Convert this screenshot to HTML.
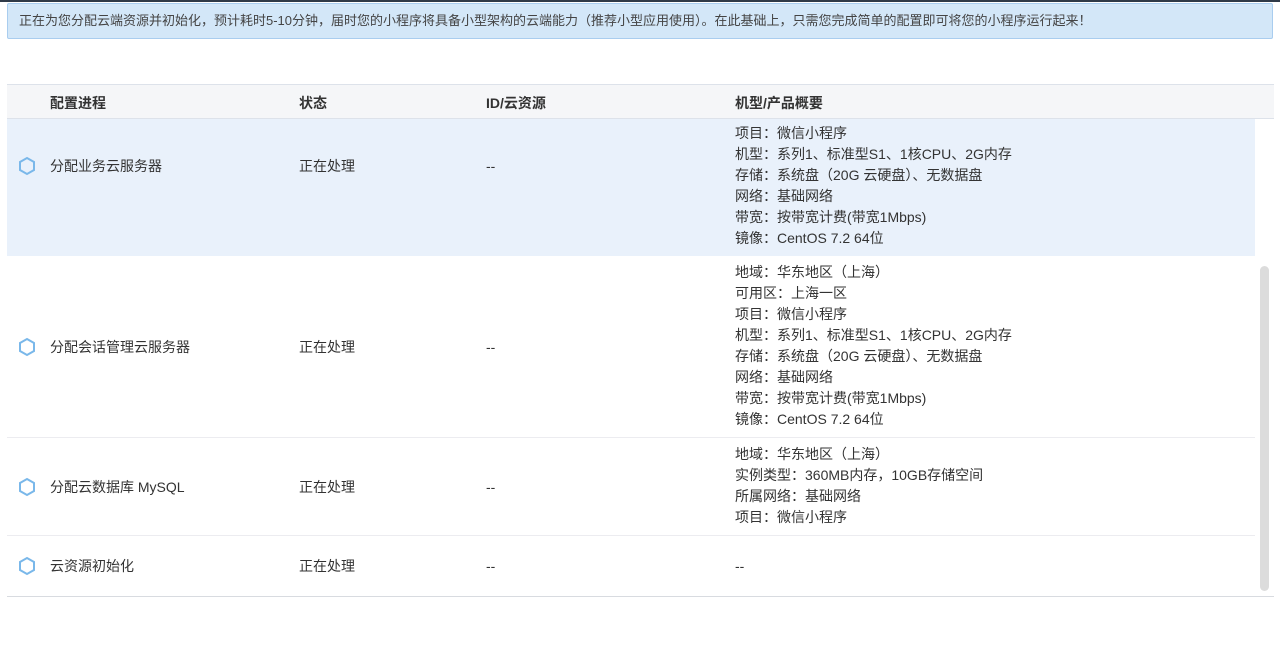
<!DOCTYPE html>
<html><head><meta charset="utf-8"><style>
*{margin:0;padding:0;box-sizing:border-box}
body{width:1280px;height:647px;background:#fff;position:relative;overflow:hidden;font-family:"Liberation Sans","Noto Sans CJK SC",sans-serif;font-size:14px;color:#333}
.top{position:absolute;left:0;top:0;width:1280px;height:2px;background:#2f3a48}
.alert{position:absolute;left:7px;top:3px;width:1266px;height:36px;background:#d3e7f8;border:1px solid #a9cdef;border-radius:2px;font-size:13px;color:#444;padding-left:11px;line-height:34px}
.head{position:absolute;left:7px;top:84px;width:1267px;height:35px;background:#f5f6f8;border-top:1px solid #dde2ea;border-bottom:1px solid #dde2ea;font-weight:bold;font-size:14px;z-index:2}
.t{position:absolute;white-space:nowrap}
.body{position:absolute;left:7px;top:112px;width:1248px;height:485px;overflow:hidden}
.inner{position:absolute;left:0;top:-37px;width:1248px}
.row{position:relative;border-bottom:1px solid #ececf0}
.row .c{position:absolute;top:0;bottom:0;display:flex;align-items:center;white-space:nowrap}
.spec{margin-left:728px;padding:6px 0;line-height:21px}
.ic{left:10px}
.bot{position:absolute;left:7px;top:596px;width:1267px;height:1px;background:#d8dbe0}
.sb{position:absolute;left:1260px;top:266px;width:9px;height:325px;background:#dcdcdc;border-radius:5px}
</style></head><body>
<div class="top"></div>
<div class="alert">正在为您分配云端资源并初始化，预计耗时5-10分钟，届时您的小程序将具备小型架构的云端能力（推荐小型应用使用）。在此基础上，只需您完成简单的配置即可将您的小程序运行起来！</div>
<div class="head">
<span class="t" style="left:43px;top:8px">配置进程</span>
<span class="t" style="left:292px;top:8px">状态</span>
<span class="t" style="left:479px;top:8px">ID/云资源</span>
<span class="t" style="left:728px;top:8px">机型/产品概要</span>
</div>
<div class="body"><div class="inner">
<div class="row" style="background:#e9f1fb;border-bottom:none;height:181px">
<div class="c ic"><svg width="20" height="20" viewBox="0 0 20 20"><path d="M10 2 L17 6 L17 14 L10 18 L3 14 L3 6 Z" fill="none" stroke="#7ab8ea" stroke-width="2"/></svg></div>
<div class="c" style="left:43px">分配业务云服务器</div>
<div class="c" style="left:292px">正在处理</div>
<div class="c" style="left:479px">--</div>
<div class="spec">地域：华东地区（上海）<br>可用区：上海一区<br>项目：微信小程序<br>机型：系列1、标准型S1、1核CPU、2G内存<br>存储：系统盘（20G 云硬盘）、无数据盘<br>网络：基础网络<br>带宽：按带宽计费(带宽1Mbps)<br>镜像：CentOS 7.2 64位</div>
</div>
<div class="row" style="height:182px">
<div class="c ic"><svg width="20" height="20" viewBox="0 0 20 20"><path d="M10 2 L17 6 L17 14 L10 18 L3 14 L3 6 Z" fill="none" stroke="#7ab8ea" stroke-width="2"/></svg></div>
<div class="c" style="left:43px">分配会话管理云服务器</div>
<div class="c" style="left:292px">正在处理</div>
<div class="c" style="left:479px">--</div>
<div class="spec">地域：华东地区（上海）<br>可用区：上海一区<br>项目：微信小程序<br>机型：系列1、标准型S1、1核CPU、2G内存<br>存储：系统盘（20G 云硬盘）、无数据盘<br>网络：基础网络<br>带宽：按带宽计费(带宽1Mbps)<br>镜像：CentOS 7.2 64位</div>
</div>
<div class="row" style="height:98px">
<div class="c ic"><svg width="20" height="20" viewBox="0 0 20 20"><path d="M10 2 L17 6 L17 14 L10 18 L3 14 L3 6 Z" fill="none" stroke="#7ab8ea" stroke-width="2"/></svg></div>
<div class="c" style="left:43px">分配云数据库 MySQL</div>
<div class="c" style="left:292px">正在处理</div>
<div class="c" style="left:479px">--</div>
<div class="spec">地域：华东地区（上海）<br>实例类型：360MB内存，10GB存储空间<br>所属网络：基础网络<br>项目：微信小程序</div>
</div>
<div class="row" style="border-bottom:none;height:60px">
<div class="c ic"><svg width="20" height="20" viewBox="0 0 20 20"><path d="M10 2 L17 6 L17 14 L10 18 L3 14 L3 6 Z" fill="none" stroke="#7ab8ea" stroke-width="2"/></svg></div>
<div class="c" style="left:43px">云资源初始化</div>
<div class="c" style="left:292px">正在处理</div>
<div class="c" style="left:479px">--</div>
<div class="c" style="left:728px">--</div>
</div>
</div></div>
<div class="bot"></div>
<div class="sb"></div>
</body></html>
